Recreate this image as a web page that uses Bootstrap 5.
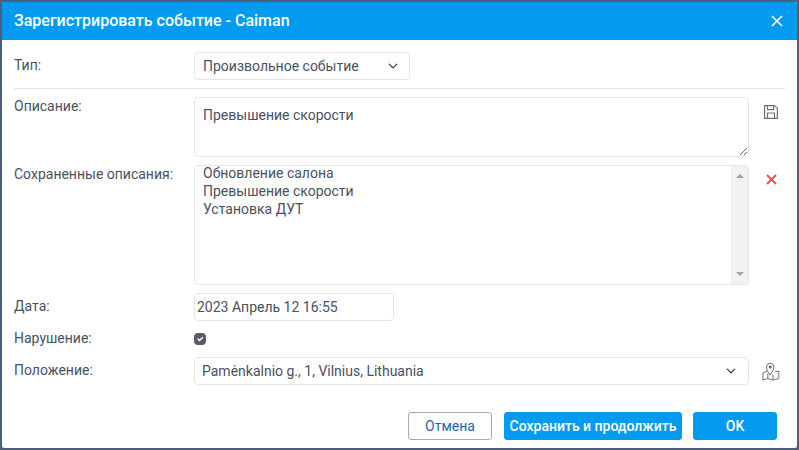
<!DOCTYPE html>
<html lang="ru">
<head>
<meta charset="utf-8">
<title>Зарегистрировать событие</title>
<link rel="stylesheet" href="https://cdn.jsdelivr.net/npm/bootstrap@5.3.0/dist/css/bootstrap.min.css">
<style>
html,body{height:100%;}
body{background:#4d5f7c;font-family:Roboto,"Liberation Sans",sans-serif;font-size:14px;color:#4a5160;padding:2px;overflow:hidden;}
.dlg{height:446px;width:795px;background:#fff;border-radius:2px;display:flex;flex-direction:column;overflow:hidden;}
.dlg-head{height:38px;background:#039bf0;color:#fff;padding:0 14px 0 12px;font-weight:500;font-size:16px;flex:none;}
.dlg-body{padding:12px 12px 0 12px;flex:1;display:flex;flex-direction:column;}
.lbl{width:180px;flex:none;line-height:18px;padding-bottom:2px;color:#4a5160;}
.row-sel{height:28px;}
.fld{font-size:14px;color:#4a5160;border:1px solid #e3e5e8;border-radius:4px;box-shadow:none;font-family:inherit;flex:none;}
.sel-type{width:216px;height:28px;padding:0 8px;background-position:right 9px center;background-size:14px 10px;}
.sep{height:1px;background:#e3e3e3;margin:8px 0;opacity:1;border:0;}
.txt{width:555px;height:60px;padding:7px 8px;line-height:20px;}
.icon-cell{width:36px;flex:none;}
.listbox{width:555px;height:120px;overflow:hidden;}
.opts{padding:0 8px;line-height:18px;flex:1;margin-top:-2px;}
.sbar{width:17px;background:#f1f1f1;padding:8px 0;}
.tri-up{width:0;height:0;border-left:4px solid transparent;border-right:4px solid transparent;border-bottom:4px solid #a3a3a3;}
.tri-dn{width:0;height:0;border-left:4px solid transparent;border-right:4px solid transparent;border-top:4px solid #a3a3a3;}
.dt{width:200px;height:28px;padding:0 2px;}
.chk{width:12px;height:12px;margin:0;background-color:#565c6c;border-color:#565c6c;border-radius:2px;}
.chk:checked{background-color:#565c6c;border-color:#565c6c;}
.sel-pos{width:555px;height:28px;padding:0 7px;background-position:right 10px center;background-size:14px 10px;}
.acts{padding:27px 8px 0 0;}
.act{height:28px;font-size:14px;font-weight:500;border-radius:3px;padding:0;line-height:26px;font-family:inherit;}
.act-cancel{width:84px;background:#fff;border:1px solid #a3a9b3;color:#2267ad;font-weight:400;}
.act-save{width:178px;background:#039bf0;border:1px solid #039bf0;color:#fff;margin:0 11px 0 12px;}
.act-ok{width:84px;background:#039bf0;border:1px solid #039bf0;color:#fff;}
.close-x{background:none;border:0;padding:0;line-height:0;}
.ic-save{margin:8px 0 0 15px;}
.ic-del{margin:9px 0 0 17px;}
.ic-map{margin:0 0 0 13px;}
</style>
</head>
<body>
<div class="dlg">
  <div class="dlg-head d-flex align-items-center justify-content-between">
    <span>Зарегистрировать событие - Caiman</span>
    <button class="close-x" type="button" aria-label="Закрыть">
      <svg width="12" height="12" viewBox="0 0 12 12"><path d="M1 1l10 10M11 1L1 11" stroke="#fff" stroke-width="1.6" fill="none"/></svg>
    </button>
  </div>
  <div class="dlg-body">
    <div class="d-flex align-items-center row-sel">
      <div class="lbl">Тип:</div>
      <select class="form-select fld sel-type"><option>Произвольное событие</option></select>
    </div>
    <hr class="sep">
    <div class="d-flex mb-2">
      <div class="lbl">Описание:</div>
      <textarea class="form-control fld txt">Превышение скорости</textarea>
      <div class="icon-cell">
        <svg class="ic-save d-block" width="14" height="14" viewBox="0 0 14 14"><path d="M.6.6h10l2.800 2.800v10H.6z M3.500.6v4h6v-4 M3.500 13.400V8h7v5.400" fill="none" stroke="#6a7080" stroke-width="1.200"/></svg>
      </div>
    </div>
    <div class="d-flex mb-2">
      <div class="lbl">Сохраненные описания:</div>
      <div class="fld listbox d-flex">
        <div class="opts">Обновление салона<br>Превышение скорости<br>Установка ДУТ</div>
        <div class="sbar d-flex flex-column justify-content-between align-items-center"><div class="tri-up"></div><div class="tri-dn"></div></div>
      </div>
      <div class="icon-cell">
        <svg class="ic-del d-block" width="11" height="11" viewBox="0 0 11 11"><path d="M1 1l9 9M10 1l-9 9" stroke="#f4524d" stroke-width="2" fill="none"/></svg>
      </div>
    </div>
    <div class="d-flex align-items-center mb-2">
      <div class="lbl">Дата:</div>
      <input class="form-control fld dt" type="text" value="2023 Апрель 12 16:55">
    </div>
    <div class="d-flex align-items-center mb-2 row-chk">
      <div class="lbl">Нарушение:</div>
      <input class="form-check-input chk" type="checkbox" checked>
    </div>
    <div class="d-flex align-items-center">
      <div class="lbl">Положение:</div>
      <select class="form-select fld sel-pos"><option>Pamėnkalnio g., 1, Vilnius, Lithuania</option></select>
      <div class="icon-cell">
        <svg class="ic-map d-block" width="18" height="19" viewBox="0 0 18 19"><path d="M5 9.500L1 10.500 .8 18l5-1.500 5 1.500 6-1.500V9l-4 1" fill="none" stroke="#6a7080" stroke-width="1"/><path d="M5.800 16.500v-5M11 18v-5" stroke="#6a7080" fill="none"/><path d="M8 13C6 10 4.500 8 4.500 5a3.700 3.700 0 0 1 7.400 0C11.900 8 10 10 8 13z" fill="#fff" stroke="#6a7080"/><circle cx="8.200" cy="5" r="1.500" fill="#5a6070"/></svg>
      </div>
    </div>
    <div class="d-flex justify-content-end acts">
      <button class="btn act act-cancel" type="button">Отмена</button>
      <button class="btn act act-save" type="button">Сохранить и продолжить</button>
      <button class="btn act act-ok" type="button">OK</button>
    </div>
  </div>
</div>
<script src="https://cdn.jsdelivr.net/npm/bootstrap@5.3.0/dist/js/bootstrap.bundle.min.js"></script>
</body>
</html>
